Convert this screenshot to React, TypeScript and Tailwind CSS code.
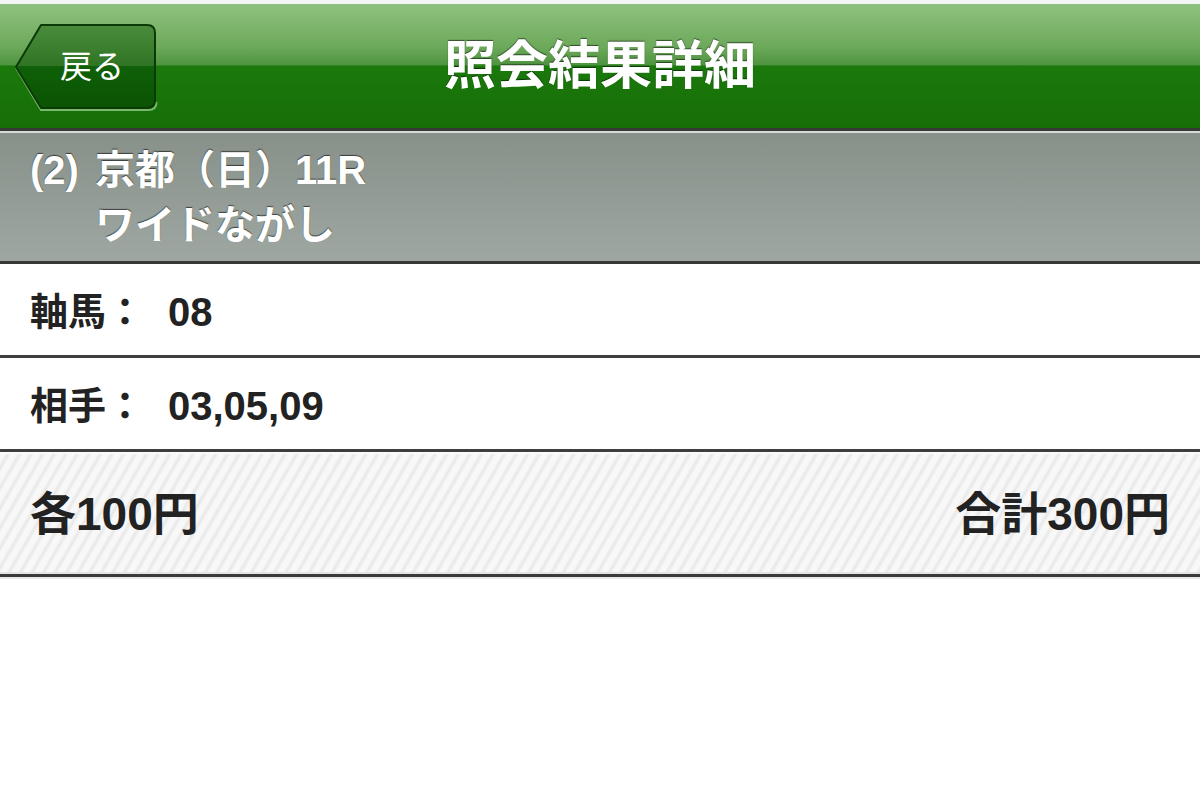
const font = "font-['Liberation_Sans','Noto_Sans_CJK_JP',sans-serif]"

function BackButton() {
  return (
    <button className="relative w-[144px] h-[88px] flex items-center justify-center pl-[12px]">
      <svg className="absolute inset-0" width="144" height="88" viewBox="0 0 144 88" aria-hidden>
        <defs>
          <linearGradient id="backFill" x1="0" y1="0" x2="0" y2="1">
            <stop offset="0" stopColor="#4a8c3c" />
            <stop offset="0.5" stopColor="#2f7424" />
            <stop offset="0.5" stopColor="#0f6008" />
            <stop offset="1" stopColor="#0a5303" />
          </linearGradient>
        </defs>
        {/* light rim under the lower edges */}
        <path d="M2 45 L27 87 H134 Q142.5 87 142.5 79" fill="none" stroke="#7cb86c" strokeWidth="2" />
        <path
          d="M2 44 L27 2 H133 Q141 2 141 10 V77 Q141 85 133 85 H27 Z"
          fill="url(#backFill)"
          stroke="#0c3a06"
          strokeWidth="2"
          strokeLinejoin="round"
        />
      </svg>
      <span className={`relative text-white text-[32px] leading-none ${font}`}>戻る</span>
    </button>
  )
}

function InfoRow({ label, value }: { label: string; value: string }) {
  return (
    <div className="h-[94px] bg-white flex items-center pl-[30px] pt-[4px] border-b-[3px] border-[#3e3e3e]">
      <span className="w-[138px] shrink-0 text-[38px]">{label}</span>
      <span className="text-[40px]">{value}</span>
    </div>
  )
}

export default function App() {
  return (
    <div className={`w-[1200px] h-[805px] bg-white ${font}`}>
      <div className="h-[4px] bg-[#f4f6f4]" />

      <header className="h-[124px] grid grid-cols-[1fr_auto_1fr] items-center bg-[linear-gradient(to_bottom,#8fc280_0%,#6ca95a_35%,#4f9440_49%,#1b790c_50%,#166e07_100%)]">
        <div className="pl-[14px] pt-[2px]">
          <BackButton />
        </div>
        <h1 className="text-white font-bold text-[52px] leading-none [text-shadow:0_-1px_1px_rgba(0,0,0,0.55)]">
          照会結果詳細
        </h1>
        <div />
      </header>
      <div className="h-[3px] bg-[#363a36]" />
      <div className="h-[2px] bg-[#d6dad6]" />

      <section className="h-[131px] flex pl-[30px] pt-[10px] bg-[linear-gradient(to_bottom,#88908a,#9ea7a1)] border-b-[3px] border-[#383838] text-white font-bold text-[40px] leading-[55px] [text-shadow:0_-1px_1px_rgba(0,0,0,0.6)]">
        <span className="w-[65px] shrink-0">(2)</span>
        <div className="flex flex-col">
          <span>京都（日）11R</span>
          <span>ワイドながし</span>
        </div>
      </section>

      <div className="text-[#222] font-bold leading-none">
        <InfoRow label="軸馬：" value="08" />
        <InfoRow label="相手：" value="03,05,09" />
      </div>

      <div className="h-[2px] bg-[#fafafa]" />
      <div className="h-[118px] flex items-center justify-between px-[30px] pt-[2px] bg-[repeating-linear-gradient(120deg,#f8f8f8_0px,#f8f8f8_4px,#e8e8e8_7px,#f8f8f8_10px)] text-[#222] font-bold text-[46px] leading-none">
        <span>各100円</span>
        <span>合計300円</span>
      </div>
      <div className="h-[2px] bg-[#e4e4e4]" />
      <div className="h-[3px] bg-[#3a3a3a]" />
      <div className="h-[2px] bg-[#e8e8e8]" />
    </div>
  )
}
